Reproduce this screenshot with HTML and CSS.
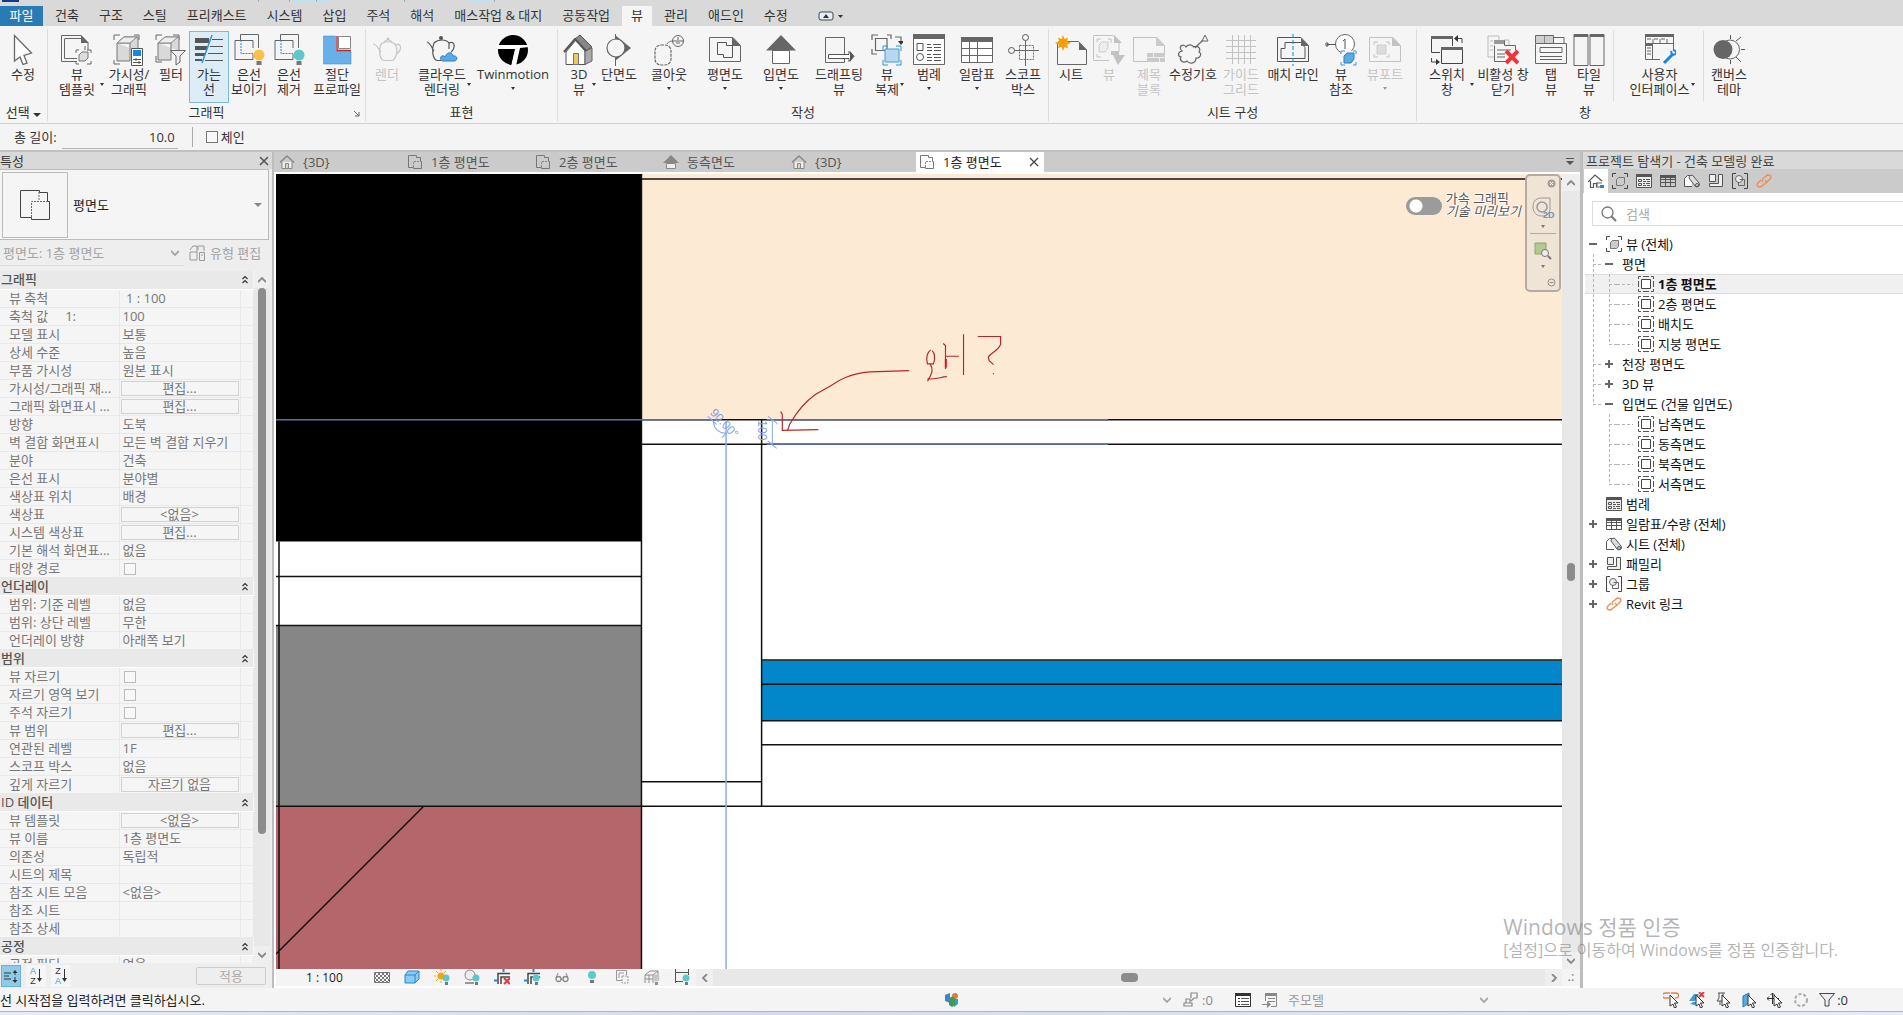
FILE: index.html
```html
<!DOCTYPE html>
<html lang="ko">
<head>
<meta charset="utf-8">
<title>건축 모델링 - 1층 평면도</title>
<link rel="stylesheet" href="styles.css">
</head>
<body>
<svg class="defs" aria-hidden="true">
<defs>
<pattern id="dots" width="4" height="4" patternUnits="userSpaceOnUse"><path d="M0 0h2v2H0zM2 2h2v2H2z" fill="#777"/></pattern>
<symbol id="cursor" viewBox="0 0 32 32"><path d="M7.500 1.500V27l5.500-4 3 7.500 4-1.500-3-7.500 7.500-2.500z" fill="#fff" stroke="#666" stroke-width="1.300"/></symbol>
<symbol id="cube" viewBox="0 0 16 16"><path d="M4.500 6.500l2-2h6v6l-2 2h-6z" fill="#ccc" stroke="#777"/><path d="M.5 4V.5H4M12 .5h3.500V4M15.500 12v3.500H12M4 15.500H.5V12" fill="none" stroke="#444"/></symbol>
<symbol id="viewtpl" viewBox="0 0 32 32"><path d="M.5 1.500H20l7 7.500v7M.5 1.500v26H16M4 4.500h16M3.500 4.500v20H16M24 12v4" fill="none" stroke="#666"/><path d="M20 1l8 8h-8z" fill="#666"/><path d="M18 21l3-3h6v6l-3 3h-6z" fill="#ddd" stroke="#777"/><path d="M15 19v-3h3M26 16h4v3M30 27v3h-4M18 30h-3v-3" fill="none" stroke="#666"/></symbol>
<symbol id="visgraph" viewBox="0 0 32 32"><path d="M1 6V1h6M21 1h5v5M1 26v4h6" fill="none" stroke="#666"/><path d="M4 9l7-6h14v14M4 9v18h13V9z" fill="#d9d9d9" stroke="#777"/><path d="M4 9h13l7-6H11z" fill="#eee" stroke="#888"/><path d="M18.500 14.500h11v17h-11z" fill="#fff" stroke="#555"/><path d="M20 16h8v6h-8z" fill="#1787e0"/><path d="M20 25.500h8M20 28.500h8M23 24v3M26 27v3" stroke="#555"/></symbol>
<symbol id="filter" viewBox="0 0 32 32"><path d="M1 6V1h6M18 1h6v5M1 22v6h6" fill="none" stroke="#666"/><path d="M3 9l7-6h14v14M3 9v17h13V9z" fill="#d9d9d9" stroke="#777"/><path d="M3 9h13l7-6H10z" fill="#eee" stroke="#888"/><path d="M15.500 16.500h15L25 22v6l-4 3v-9z" fill="#eee" stroke="#666"/></symbol>
<symbol id="thin" viewBox="0 0 32 32"><path d="M2 4h14v5H2zM2 12h12v4H2zM2 19h10v3H2zM2 25h7v2H2z" fill="#555"/><path d="M19 5.500h11M17 12.500h13M15 19.500h15M12 26.500h18" stroke="#555"/><path d="M19 1L9 29" stroke="#2e94e6" stroke-width="1.500"/></symbol>
<symbol id="hide" viewBox="0 0 32 32"><path d="M7.500 6V.5h18V14M7 6.500H2v19h18V20M2 6.500h18V14" fill="none" stroke="#666"/><path d="M8 6v13.500h12" fill="none" stroke="#1787e0" stroke-dasharray="2 1"/><circle cx="26" cy="21" r="5.500" fill="currentColor"/><path d="M23.500 27h5v4h-5z" fill="#777"/></symbol>
<symbol id="cut" viewBox="0 0 32 32"><path d="M2.500 2h12v15.500H30V30H2.500z" fill="#67b0e8" stroke="#4495d4" stroke-width=".6"/><path d="M17.500 2.500h12v12h-12z" fill="#fff" stroke="#888"/><path d="M16 2v14.500h14" fill="none" stroke="#c0282e" stroke-width="1.400"/></symbol>
<symbol id="teapot" viewBox="0 0 32 32"><path d="M10 10C7 17 9 26 13 26.500h8C25 25 28 17 24 10 20 7 14 7 10 10zM10 18C8 16 6 10 2 10M25 11c6-3 6 6 0 9M13 8c2-3 6-3 8 0" fill="none" stroke="currentColor" stroke-width="1.200"/><circle cx="17" cy="5" r="1.500" fill="currentColor"/></symbol>
<symbol id="cloudpot" viewBox="0 0 32 32"><path d="M8 9C5 16 7 25 11 26.500h6M8 9C12 5 20 5 23 9v6M8 17C6 15 5 9 1 8M23 9c7-3 6 6 2 9" fill="none" stroke="#555" stroke-width="1.200"/><circle cx="15" cy="4" r="2" fill="#555"/><path d="M16 27c-4-4 1-7 3-4 2-6 8-5 8-1 5-1 5 5 1 5z" fill="#5aa9e6" stroke="#377eba"/></symbol>
<symbol id="twin" viewBox="0 0 32 32"><circle cx="16" cy="16" r="15" fill="#000"/><path d="M0 11h32v2l-9 1-4 18h-5l4-17H0z" fill="#fff"/><path d="M16.500 17l-3 14" stroke="#000" stroke-width="1"/></symbol>
<symbol id="house" viewBox="0 0 32 32"><path d="M3 18v12.500h19V17L13 6z" fill="#fff" stroke="#555"/><path d="M22 17v13.500l7-3.500V14z" fill="#aaa" stroke="#666"/><path d="M12 5l5-4 12 12-6 4z" fill="#888" stroke="#555"/><path d="M1 18L12 5l11 12" fill="none" stroke="#555" stroke-width="2"/><path d="M10.500 19.500h5v11h-5z" fill="#f1c958" stroke="#777"/></symbol>
<symbol id="section" viewBox="0 0 32 32"><path d="M12 1l16 13-16 13z" fill="#666"/><path d="M12.500 0v32" stroke="#666"/><circle cx="13" cy="14" r="9" fill="#f5f5f5" stroke="#666" stroke-width="1.200"/></symbol>
<symbol id="callout" viewBox="0 0 32 32"><rect x="2" y="11" width="16" height="20" rx="6" fill="none" stroke="#666" stroke-width="1.200" stroke-dasharray="3 1"/><path d="M14 10c2-3 5-3 6-3h11" fill="none" stroke="#666"/><circle cx="25" cy="7" r="5.500" fill="none" stroke="#666"/><path d="M25 3v3M23 9h4" stroke="#666"/></symbol>
<symbol id="plan" viewBox="0 0 32 32"><path d="M.5 3.500H24l7.500 8v16H.5z" fill="none" stroke="#666"/><path d="M23 3l9 9h-9z" fill="#666"/><path d="M8.500 8.500h9v3h6v12h-9v-3h-6z" fill="none" stroke="#555"/></symbol>
<symbol id="elev" viewBox="0 0 32 32"><path d="M16 1l15 15.500H1z" fill="#666"/><path d="M7.500 16.500h17v13h-17z" fill="#fff" stroke="#666"/></symbol>
<symbol id="draft" viewBox="0 0 32 32"><path d="M2.500 3.500h19v25h-19z" fill="none" stroke="#666"/><path d="M5.500 20.500H26v-3l5 5-5 5v-3H5.500z" fill="#fff" stroke="#555"/><path d="M27 17l4 5-4 6z" fill="#555"/></symbol>
<symbol id="dup" viewBox="0 0 32 32"><path d="M1 6V1h6M16 1h4v4M1 15v5h5M4.500 4.500H16v12H4.500zM24 3h6v6" fill="none" stroke="#666" stroke-width="1.200"/><path d="M27 7h6l-3 4z" fill="#333"/><path d="M14 15h14v13H14z" fill="#b5d8f3" stroke="#4a9adb"/><path d="M12 17v-5h5M25 12h5v5M12 26v5h5M30 26v5h-5" fill="none" stroke="#2d93d6"/></symbol>
<symbol id="legend" viewBox="0 0 32 32"><path d="M.5.500h31v30H.5z" fill="#fff" stroke="#666"/><path d="M0 0h32v5H0z" fill="#666"/><path d="M4 9.500h6v7H4z" fill="none" stroke="#555"/><circle cx="7" cy="23" r="3.500" fill="none" stroke="#555"/><path d="M14 10.500h4M20 10.500h8M14 13.500h5M21 13.500h7M14 16.500h5M21 16.500h7M14 20.500h4M20 20.500h8M14 23.500h5M21 23.500h7M14 26.500h5M21 26.500h7" stroke="#555"/></symbol>
<symbol id="sched" viewBox="0 0 32 32"><path d="M.5 3.500h31v25H.5z" fill="#fff" stroke="#666"/><path d="M0 3h32v5H0z" fill="#666"/><path d="M.5 14.500h31M.5 21.500h31M8.500 8v20M16.500 8v20" stroke="#666"/></symbol>
<symbol id="scope" viewBox="0 0 32 32"><path d="M18.500 7v25M8 16.500h24" stroke="#666"/><circle cx="18.500" cy="3.500" r="3" fill="none" stroke="#555"/><circle cx="4.500" cy="16.500" r="3" fill="none" stroke="#555"/><path d="M12.500 11.500h14v14h-14z" fill="none" stroke="#1787e0" stroke-dasharray="2 1"/></symbol>
<symbol id="sheet" viewBox="0 0 32 32"><path d="M2.500 8v22.500h29V16l-8-8.500H12" fill="none" stroke="#666"/><path d="M24 8l8 8h-8z" fill="#666"/><path d="M8 1l1.500 4L13 3.500 12 7l4 2-4 1.500 1 4L9.500 13 8 17l-1.500-4L3 14l1-3.500L0 9l4-2-1-3.500L6.500 5z" fill="#f59f0a"/></symbol>
<symbol id="placeview" viewBox="0 0 32 32"><path d="M26 18v-9l-6-7.500H.5v25H16M4 8V5h4M15 5h3v4M4 20v3h4" fill="none" stroke="#c2c2c2"/><path d="M21 1l8 8h-8zM18 17h8v4h6l-7 10-5-10h-2z" fill="#c2c2c2"/><path d="M6 11l3-3h6v6l-3 4H6z" fill="#eee" stroke="#ccc"/></symbol>
<symbol id="title" viewBox="0 0 32 32"><path d="M.5 3.500H24l7.500 8v16H.5z" fill="none" stroke="#c2c2c2"/><path d="M23 3l9 9h-9zM14 19h18v9H14z" fill="#cacaca"/><path d="M14 23.500h18M20.500 19v4M26.500 24v4" stroke="#eee"/></symbol>
<symbol id="rev" viewBox="0 0 32 32"><path d="M5 17c-5-5 2-8 4-4 3-4 8-1 7 0 6-2 8 2 6 5 4 2 0 7-3 6 0 5-6 7-9 3-4 3-8-1-6-4-4-1-3-5 1-6zM18 14l8-8" fill="none" stroke="#666" stroke-width="1.200"/><path d="M25 7h6l-3-6z" fill="none" stroke="#666"/></symbol>
<symbol id="grid" viewBox="0 0 32 32"><path d="M7.500 1v29M13.500 1v29M19.500 1v29M25.500 1v29M1 6.500h30M1 12.500h30M1 18.500h30M1 24.500h30" stroke="#c2c2c2"/></symbol>
<symbol id="match" viewBox="0 0 32 32"><path d="M.5 3.500H24l7.500 8v16H.5zM9 8.500h-1v6H4v10h24v-11l-4-5H9" fill="none" stroke="#555"/><path d="M24 4l8 8h-8z" fill="#666"/><path d="M16 0v32" stroke="#1787e0" stroke-dasharray="4 2"/></symbol>
<symbol id="ref" viewBox="0 0 32 32"><circle cx="20" cy="10" r="9.500" fill="#fff" stroke="#666"/><path d="M2 10.500h9M1 9h2v3H1zM18 7l2-2v10" fill="none" stroke="#555"/><path d="M16 17h16v15H16z" fill="#f5f5f5"/><path d="M16 20v-3h4M28 17h3v3M31 28v3h-3M20 31h-4v-3" fill="none" stroke="#3a97da"/><path d="M19 22l3-3h7v6l-3 4h-7z" fill="#5aaae4" stroke="#2a7fc0"/></symbol>
<symbol id="vport" viewBox="0 0 32 32"><path d="M.5 3.500H24l7.500 8v16H.5zM5 11V8h4M17 8h3v3M5 20v3h4M17 23h3v-3" fill="none" stroke="#c2c2c2"/><path d="M23 3l9 9h-9z" fill="#c2c2c2"/><path d="M8 11h9v9H8z" fill="#ddd" stroke="#ccc"/></symbol>
<symbol id="switch" viewBox="0 0 32 32"><path d="M9 18.500H.5v-16h21V12M10.500 14.500h21v15h-21zM31 9V4.500h-5M.5 24v4H6" fill="none" stroke="#444"/><path d="M0 2h22v3H0zM10 13h22v3H10z" fill="#666"/><path d="M27 1v7l-4-3.500zM5 25v6l4-3z" fill="#333"/></symbol>
<symbol id="closewin" viewBox="0 0 32 32"><path d="M1 2h11v4M1 2v21h6M3 7h3M3 12h3M3 16h3M17 6h5v5" fill="none" stroke="#bbb"/><path d="M7.500 11.500v16H18M7.500 6.500h10v5h11v5M10 16h14M10 20h8M10 23h8" fill="none" stroke="#666"/><path d="M7 6h10v4H7z" fill="#999"/><path d="M19 17l12 12M31 17L19 29" stroke="#ee3439" stroke-width="4"/></symbol>
<symbol id="tabview" viewBox="0 0 32 32"><path d="M.5 9.500h31v20H.5zM.5 9V1.500h18V9M9.500 2v7M19 3.500h10V9M5 13.500h22v5H5zM5 22.500h22M5 25.500h22" fill="none" stroke="#666"/><path d="M1 2h17v7H1z" fill="#aaa" opacity=".5"/></symbol>
<symbol id="tile" viewBox="0 0 32 32"><path d="M1 .5h14v31H1zM17 .5h14v31H17z" fill="none" stroke="#666"/><path d="M1 0h14v3H1zM17 0h14v3H17z" fill="#666"/></symbol>
<symbol id="ui" viewBox="0 0 32 32"><path d="M16 25.500H1.500v-25h28V16M1.500 9.500h28M8.500 9v16M9 5v4M16 5v4M23 5v4M3 14h4M3 17h4M3 20h4M3 5h4M10 5h4M17 5h4" fill="none" stroke="#666"/><path d="M1 0h29v3H1zM1 10h7v2H1z" fill="#666"/><path d="M20 29l9-9" stroke="#1787e0" stroke-width="3"/><path d="M27 17l1 4 4-1v-3l-3-1" fill="none" stroke="#1787e0" stroke-width="2"/></symbol>
<symbol id="theme" viewBox="0 0 32 32"><circle cx="17" cy="15.500" r="9.500" fill="none" stroke="#666"/><circle cx="10" cy="15.500" r="9.500" fill="#666"/><path d="M17.500 1v4M17.500 26v4M23 7l5-4M23 23l5 5M28 15.500h5" stroke="#555"/></symbol>
<symbol id="planfile" viewBox="0 0 16 16"><path d="M1.500 1.500h8v2h4v4h1v7h-8v-1h-5z" fill="none" stroke="#777"/><path d="M6.500 13V7.500h7" fill="none" stroke="#888" stroke-dasharray="2 1"/></symbol>
<symbol id="home" viewBox="0 0 16 16"><path d="M3 8v6.500h10V8" fill="#eee" stroke="#888"/><path d="M1 8.500L8 2l7 6.500" fill="none" stroke="#888" stroke-width="1.500"/><path d="M6.500 9.500h3v5h-3z" fill="#dfd6ac" stroke="#888"/></symbol>
<symbol id="elevs" viewBox="0 0 16 16"><path d="M8 1l8 8H0z" fill="#888"/><path d="M3.500 9.500h9v5h-9z" fill="#eee" stroke="#888"/></symbol>
<symbol id="viewbox" viewBox="0 0 16 16"><path d="M3.500 3.500h9v9h-9z" fill="#fff" stroke="#444"/><path d="M.5 3V.5H3M5 .5h6M13 .5h2.500V3M15.500 5v6M15.500 13v2.500H13M11 15.500H5M3 15.500H.5V13M.5 11V5" fill="none" stroke="#555"/></symbol>
<symbol id="legs" viewBox="0 0 16 16"><path d="M.5 1.500h15v13H.5z" fill="#eee" stroke="#555"/><path d="M0 1h16v3H0z" fill="#555"/><path d="M2.500 6.500h3v2h-3zM2.500 10.500h3v2h-3zM7 6.500h2M10 6.500h4M7 8.500h3M11 8.500h3M7 10.500h2M10 10.500h4M7 12.500h3M11 12.500h3" fill="none" stroke="#555"/></symbol>
<symbol id="scheds" viewBox="0 0 16 16"><path d="M.5 2.500h15v11H.5zM0 6.500h16M0 9.500h16M5.500 3v11M10.500 3v11" fill="none" stroke="#555"/><path d="M0 2h16v3H0z" fill="#555"/></symbol>
<symbol id="sheets" viewBox="0 0 16 16"><path d="M8 13.500H.5v-8l3-3h5" fill="#fff" stroke="#555"/><path d="M5 5c0-3 4-4 5-1l5 6c2 3-2 5-4 3z" fill="#ddd" stroke="#555"/><circle cx="13" cy="12" r="1.500" fill="none" stroke="#555"/></symbol>
<symbol id="fam" viewBox="0 0 16 16"><path d="M1.500 1.500h6v7h-6zM10.500 1.500h4v12h-13v-3h9z" fill="#eee" stroke="#555"/></symbol>
<symbol id="group" viewBox="0 0 16 16"><path d="M4 .5H.5v15H4M12 .5h3.500v15H12" fill="none" stroke="#444"/><circle cx="7" cy="6" r="3.500" fill="#eee" stroke="#666"/><path d="M7.500 6.500h5v6h-6V9" fill="none" stroke="#666"/></symbol>
<symbol id="link" viewBox="0 0 16 16"><path d="M7 9C5 7 7 5 9 4c3-4 8-1 5 2l-4 4M9 7c3 2 0 4-2 5-3 4-8 1-5-2l3-3" fill="none" stroke="#ee8a55" stroke-width="1.300"/></symbol>
<symbol id="proj" viewBox="0 0 16 16"><path d="M0 9l7-7 7 6M2.500 8v6.500h3v-4h3v4" fill="none" stroke="#555" stroke-width="1.200"/><path d="M9 9v5h5M9 10h5" fill="none" stroke="#666"/><path d="M12 12h4v3h-4z" fill="#2e82c4"/></symbol>
<symbol id="mag" viewBox="0 0 16 16"><circle cx="6.500" cy="6.500" r="5.500" fill="none" stroke="#777" stroke-width="1.300"/><path d="M10.500 10.500L15 15" stroke="#777" stroke-width="2"/></symbol>
<symbol id="chev" viewBox="0 0 8 12"><path d="M1.500 5L4 2.500 6.500 5M1.500 9L4 6.500 6.500 9" fill="none" stroke="#333" stroke-width="1.200"/></symbol>
<symbol id="up" viewBox="0 0 8 8"><path d="M0 6l4-4 4 4" fill="none" stroke="#888" stroke-width="1.800"/></symbol>
<symbol id="bulb" viewBox="0 0 16 16"><circle cx="8" cy="6" r="4" fill="#5cc8cc"/><path d="M6 11h4v3H6z" fill="#777"/></symbol>
<symbol id="minibulb" viewBox="0 0 16 16"><circle cx="12" cy="9" r="3.500" fill="currentColor"/><path d="M11 13h3v3h-3z" fill="#777"/></symbol>
<symbol id="corner" viewBox="0 0 16 16"><path d="M4 15V4.500h12M7 15V8h9" fill="none" stroke="#444" stroke-width="1.500"/><path d="M0 11.500h3M9.500 0v3" stroke="#2686cc" stroke-width="2"/></symbol>
<symbol id="pick" viewBox="0 0 16 16"><path d="M7 3v11l3-2 1.500 4 2-1-2-4H15z" fill="#fff" stroke="#333"/></symbol>
</defs>
</svg>

<header class="ribbon">
<svg class="title-edge" aria-hidden="true"><path d="M2 0h17v2H2z" fill="#163a83"/><path d="M293 0h36v2h-36zM470 0h22v2h-22z" fill="#bfe3f2"/><path d="M258.500 0v2M289.500 0v2M316.500 0v2M404.500 0v2M494.500 0v2" stroke="#aaa"/></svg>
<nav class="tabs" aria-label="리본 탭">
<button class="tab file">파일</button><button class="tab">건축</button><button class="tab">구조</button><button class="tab">스틸</button><button class="tab">프리캐스트</button><button class="tab">시스템</button><button class="tab">삽입</button><button class="tab">주석</button><button class="tab">해석</button><button class="tab">매스작업 &amp; 대지</button><button class="tab">공동작업</button><button class="tab on">뷰</button><button class="tab">관리</button><button class="tab">애드인</button><button class="tab">수정</button>
<button class="mini" aria-label="리본 최소화"><svg width="26" height="10"><rect x="1" y="1" width="14" height="8" rx="2" fill="#e8eef6" stroke="#444"/><path d="M5 7l3-4 3 4zM20 4h5l-2.500 3z" fill="#333"/></svg></button>
</nav>
<div class="panels">
<section class="panel p-sel"><div class="tools">
<button class="tool w40"><svg><use href="#cursor"/></svg>수정</button>
</div><h2>선택 <i class="caret big"></i></h2></section>
<section class="panel p-gfx"><div class="tools">
<button class="tool w56"><svg><use href="#viewtpl"/></svg>뷰<br>템플릿<i class="caret side"></i></button>
<button class="tool w48"><svg><use href="#visgraph"/></svg>가시성/<br>그래픽</button>
<button class="tool w36"><svg><use href="#filter"/></svg>필터</button>
<button class="tool w40 active"><svg><use href="#thin"/></svg>가는<br>선</button>
<button class="tool w40"><svg class="amber"><use href="#hide"/></svg>은선<br>보이기</button>
<button class="tool w40"><svg class="teal"><use href="#hide"/></svg>은선<br>제거</button>
<button class="tool w56"><svg><use href="#cut"/></svg>절단<br>프로파일</button>
</div><h2>그래픽<svg class="launch" width="6" height="6"><path d="M0 0l5 5M5 1v4H1" fill="none" stroke="#666"/></svg></h2></section>
<section class="panel p-pres"><div class="tools">
<button class="tool w40" disabled><svg><use href="#teapot"/></svg>렌더</button>
<button class="tool w60"><svg><use href="#cloudpot"/></svg>클라우드<br>렌더링<i class="caret side"></i></button>
<button class="tool w72"><svg><use href="#twin"/></svg>Twinmotion<i class="caret"></i></button>
</div><h2>표현</h2></section>
<section class="panel p-make"><div class="tools">
<button class="tool w36"><svg><use href="#house"/></svg>3D<br>뷰<i class="caret side"></i></button>
<button class="tool w44"><svg><use href="#section"/></svg>단면도</button>
<button class="tool w56"><svg><use href="#callout"/></svg>콜아웃<i class="caret"></i></button>
<button class="tool w56"><svg><use href="#plan"/></svg>평면도<i class="caret"></i></button>
<button class="tool w56"><svg><use href="#elev"/></svg>입면도<i class="caret"></i></button>
<button class="tool w60"><svg><use href="#draft"/></svg>드래프팅<br>뷰</button>
<button class="tool w36"><svg><use href="#dup"/></svg>뷰<br>복제<i class="caret side"></i></button>
<button class="tool w48"><svg><use href="#legend"/></svg>범례<i class="caret"></i></button>
<button class="tool w48"><svg><use href="#sched"/></svg>일람표<i class="caret"></i></button>
<button class="tool w44"><svg><use href="#scope"/></svg>스코프<br>박스</button>
</div><h2>작성</h2></section>
<section class="panel p-sheet"><div class="tools">
<button class="tool w36"><svg><use href="#sheet"/></svg>시트</button>
<button class="tool w40" disabled><svg><use href="#placeview"/></svg>뷰</button>
<button class="tool w40" disabled><svg><use href="#title"/></svg>제목<br>블록</button>
<button class="tool w48"><svg><use href="#rev"/></svg>수정기호</button>
<button class="tool w48" disabled><svg><use href="#grid"/></svg>가이드<br>그리드</button>
<button class="tool w56"><svg><use href="#match"/></svg>매치 라인</button>
<button class="tool w40"><svg><use href="#ref"/></svg>뷰<br>참조</button>
<button class="tool w48" disabled><svg><use href="#vport"/></svg>뷰포트<i class="caret"></i></button>
</div><h2>시트 구성</h2></section>
<section class="panel p-win"><div class="tools">
<button class="tool w56"><svg><use href="#switch"/></svg>스위치<br>창<i class="caret side"></i></button>
<button class="tool w56"><svg><use href="#closewin"/></svg>비활성 창<br>닫기</button>
<button class="tool w40"><svg><use href="#tabview"/></svg>탭<br>뷰</button>
<button class="tool w36"><svg><use href="#tile"/></svg>타일<br>뷰</button>
<span class="sep"></span>
<button class="tool w72"><svg><use href="#ui"/></svg>사용자<br>인터페이스<i class="caret side"></i></button>
<span class="sep tight"></span>
<button class="tool w48"><svg><use href="#theme"/></svg>캔버스<br>테마</button>
</div><h2>창</h2></section>
</div>
</header>

<form class="options">
<label for="len">총 길이:</label><input id="len" type="text" value="10.0">
<label class="chain"><input type="checkbox" class="check">체인</label>
</form>

<main class="work">
<aside class="props">
<h2 class="bar">특성<button class="x" aria-label="닫기"><svg width="10" height="10"><path d="M1 1l8 8M9 1L1 9" stroke="#555" stroke-width="1.600"/></svg></button></h2>
<button class="type"><span class="thumb"><svg width="32" height="32" viewBox="0 0 32 32"><path d="M1.500 1.500h19v2h8v9h2v18h-18v-2h-11z" fill="none" stroke="#444"/><path d="M12.500 28V12.500h16M20 3v9" fill="none" stroke="#666" stroke-dasharray="2 1"/></svg></span><span>평면도</span><i class="caret big"></i></button>
<div class="inst"><span class="drop"><select aria-label="인스턴스" disabled><option>평면도: 1층 평면도</option></select><svg width="8" height="8"><use href="#up"/></svg></span><button disabled><svg width="16" height="16"><path d="M1 5l3-4h4v6H1v8h7V7M9 5V1h6v5M10.500 7.500h5v8h-5zM12 10h2" fill="none" stroke="#999"/></svg>유형 편집</button></div>
<div class="plist">
<table>
<colgroup><col class="c1"><col class="c2"><col class="c3"></colgroup>
<tbody>
<tr class="grp"><th colspan="2">그래픽</th><td><svg><use href="#chev"/></svg></td></tr>
<tr><th>뷰 축척</th><td>&nbsp;1 : 100</td><td></td></tr>
<tr><th>축척 값 &nbsp; &nbsp; 1:</th><td>100</td><td></td></tr>
<tr><th>모델 표시</th><td>보통</td><td></td></tr>
<tr><th>상세 수준</th><td>높음</td><td></td></tr>
<tr><th>부품 가시성</th><td>원본 표시</td><td></td></tr>
<tr><th>가시성/그래픽 재...</th><td><button>편집...</button></td><td></td></tr>
<tr><th>그래픽 화면표시 ...</th><td><button>편집...</button></td><td></td></tr>
<tr><th>방향</th><td>도북</td><td></td></tr>
<tr><th>벽 결합 화면표시</th><td>모든 벽 결합 지우기</td><td></td></tr>
<tr><th>분야</th><td>건축</td><td></td></tr>
<tr><th>은선 표시</th><td>분야별</td><td></td></tr>
<tr><th>색상표 위치</th><td>배경</td><td></td></tr>
<tr><th>색상표</th><td><button>&lt;없음&gt;</button></td><td></td></tr>
<tr><th>시스템 색상표</th><td><button>편집...</button></td><td></td></tr>
<tr><th>기본 해석 화면표...</th><td>없음</td><td></td></tr>
<tr><th><label for="sun">태양 경로</label></th><td><input id="sun" type="checkbox" class="check"></td><td></td></tr>
</tbody>
<tbody>
<tr class="grp"><th colspan="2">언더레이</th><td><svg><use href="#chev"/></svg></td></tr>
<tr><th>범위: 기준 레벨</th><td>없음</td><td></td></tr>
<tr><th>범위: 상단 레벨</th><td>무한</td><td></td></tr>
<tr><th>언더레이 방향</th><td>아래쪽 보기</td><td></td></tr>
</tbody>
<tbody>
<tr class="grp"><th colspan="2">범위</th><td><svg><use href="#chev"/></svg></td></tr>
<tr><th><label for="crop">뷰 자르기</label></th><td><input id="crop" type="checkbox" class="check"></td><td></td></tr>
<tr><th><label for="cropv">자르기 영역 보기</label></th><td><input id="cropv" type="checkbox" class="check"></td><td></td></tr>
<tr><th><label for="cropa">주석 자르기</label></th><td><input id="cropa" type="checkbox" class="check"></td><td></td></tr>
<tr><th>뷰 범위</th><td><button>편집...</button></td><td></td></tr>
<tr><th>연관된 레벨</th><td>1F</td><td></td></tr>
<tr><th>스코프 박스</th><td>없음</td><td></td></tr>
<tr><th>깊게 자르기</th><td><button>자르기 없음</button></td><td></td></tr>
</tbody>
<tbody>
<tr class="grp"><th colspan="2">ID 데이터</th><td><svg><use href="#chev"/></svg></td></tr>
<tr><th>뷰 템플릿</th><td><button>&lt;없음&gt;</button></td><td></td></tr>
<tr><th>뷰 이름</th><td>1층 평면도</td><td></td></tr>
<tr><th>의존성</th><td>독립적</td><td></td></tr>
<tr><th>시트의 제목</th><td></td><td></td></tr>
<tr><th>참조 시트 모음</th><td>&lt;없음&gt;</td><td></td></tr>
<tr><th>참조 시트</th><td></td><td></td></tr>
<tr><th>참조 상세</th><td></td><td></td></tr>
</tbody>
<tbody>
<tr class="grp"><th colspan="2">공정</th><td><svg><use href="#chev"/></svg></td></tr>
<tr><th>공정 필터</th><td>없음</td><td></td></tr>
</tbody>
</table>
<div class="vscroll"><button aria-label="위로"><svg width="8" height="8"><use href="#up"/></svg></button><div class="track"><div class="knob"></div></div><button class="down" aria-label="아래로"><svg width="8" height="8"><use href="#up"/></svg></button></div>
</div>
<div class="pfoot">
<button class="sort on" aria-label="그룹 정렬"><svg width="14" height="14"><path d="M0 4h7M0 7h5M0 10h7M11 2v4M11 8v5" stroke="#333"/><path d="M8.500 4L11 1l2.500 3M8.500 11l2.500 3 2.500-3" fill="#333"/></svg></button>
<button class="sort" aria-label="오름차순"><b class="bl">A</b><b>Z</b><svg width="5" height="14"><path d="M2.500 0v10" stroke="#333"/><path d="M0 9h5l-2.500 4z" fill="#333"/></svg></button>
<button class="sort" aria-label="내림차순"><b>Z</b><b class="bl">A</b><svg width="5" height="14"><path d="M2.500 0v10" stroke="#333"/><path d="M0 9h5l-2.500 4z" fill="#333"/></svg></button>
<button class="apply" disabled>적용</button>
</div>
</aside>

<section class="doc">
<nav class="dtabs" aria-label="열린 뷰">
<button><svg><use href="#home"/></svg>{3D}</button><button><svg><use href="#planfile"/></svg>1층 평면도</button><button><svg><use href="#planfile"/></svg>2층 평면도</button><button><svg><use href="#elevs"/></svg>동측면도</button><button><svg><use href="#home"/></svg>{3D}</button><button class="on"><svg><use href="#planfile"/></svg>1층 평면도<svg class="cl" viewBox="0 0 10 10"><path d="M1 1l8 8M9 1L1 9" stroke="#444" stroke-width="1.300"/></svg></button>
<button class="more" aria-label="뷰 목록"><svg width="8" height="8"><path d="M0 .5h8" stroke="#555"/><path d="M0 3h8L4 7z" fill="#555"/></svg></button>
</nav>
<div class="view">
<div class="canvas">
<svg class="drawing" viewBox="0 0 1286 794" preserveAspectRatio="xMinYMin slice">
<path d="M0 0h1286v794H0z" fill="#fff"/>
<path d="M365 0h921v245H365z" fill="#fdead4"/>
<path d="M0 0h365v367H0z"/>
<path d="M0 451h365v181H0z" fill="#868686"/>
<path d="M0 632h365v162H0z" fill="#b4666b"/>
<path d="M485 486h801v60H485z" fill="#0287cb"/>
<g stroke="#111" stroke-width="1.500" fill="none">
<path d="M365 5h921M365 245.500h921M365 270h921M0 402h365M0 451h365M0 631.500h1286M365 607h120M485 485.500h801M485 509.500h801M485 546h801M485 570h801M365 0v794M3 367v427M485 245v386M0 779l147-147"/>
</g>
<path d="M0 245.500h444M490 245.500h341M490 270h341" stroke="#5b6f9f" stroke-width="1.500"/>
<path d="M449.500 246v548" stroke="#8fabeb" stroke-width="1.500"/>
<g transform="translate(404 136) scale(.33333)" fill="none" stroke-width="3" stroke="#86a5ea">
<path d="M82 318l26 24M98 335c4 22 18 34 40 34M124 382l16-16M275 330v70M262 318l28 22M262 392l26 22"/>
<g stroke="#b5262b" stroke-width="3.500">
<path d="M685 181l-118 4c-60 6-90 22-118 42l-44 25c-40 28-62 62-78 90l-6 18M300 304l5 8v48l108-2"/>
<path d="M750 119c-18 12-12 32-10 42h18c6-20 4-32-4-40M748 161c8 14 10 22-8 52M740 206c24 2 40-6 58-7M787 100l7 6v70M796 138h38M848 72v122M891 79h68v24c-8 20-30 24-37 38l3 10 13 12M936 190h3"/>
<path d="M795 146v26" stroke="#e0141c" stroke-width="6"/>
</g>
</g>
<g fill="#7f9fe8" class="dim"><text transform="translate(433 239) rotate(47)">90.00°</text><text transform="translate(481 246) rotate(90)">100</text></g>
</svg>
<label class="accel"><input type="checkbox"><span>가속 그래픽<br><em>기술 미리보기</em></span></label>
<div class="navbar">
<button aria-label="닫기"><svg width="9" height="9"><circle cx="4.500" cy="4.500" r="4" fill="#aaa095"/><path d="M3 3l3 3M6 3L3 6" stroke="#fff"/></svg></button>
<svg width="24" height="24"><path d="M2 11C2 4 6 2 11 2h8v10c0 6-3 8-8 8s-9-3-9-9z" fill="none" stroke="#999"/><circle cx="11" cy="11" r="5" fill="none" stroke="#999" stroke-width="1.500"/><text x="12" y="22">2D</text></svg>
<i class="caret"></i><hr>
<svg width="18" height="18"><path d="M1 1h11v11H1z" fill="#b1ca8e" stroke="#8aa376"/><circle cx="11" cy="11" r="3.500" fill="#eee" stroke="#777"/><path d="M14 14l3 3" stroke="#777" stroke-width="2"/></svg>
<i class="caret"></i>
<button class="min" aria-label="최소화"><svg width="9" height="9"><circle cx="4.500" cy="4.500" r="3.500" fill="none" stroke="#998f84"/><path d="M2.500 4.500h4" stroke="#998f84"/></svg></button>
</div>
</div>
<div class="vscroll wide"><button aria-label="위로"><svg width="8" height="8"><use href="#up"/></svg></button><div class="track"><div class="knob"></div></div><button class="down" aria-label="아래로"><svg width="8" height="8"><use href="#up"/></svg></button></div>
</div>
<div class="vbar">
<button class="scale">1 : 100</button>
<div class="vtools">
<svg viewBox="0 0 16 16"><path d="M.5 3.500h15v10H.5z" fill="url(#dots)" stroke="#777"/></svg>
<svg viewBox="0 0 16 16"><path d="M1 6l3-4h11v8l-4 4H1z" fill="#8ecbf4" stroke="#2686cc"/><path d="M1 6h10v8M11 6l4-4" fill="none" stroke="#2686cc"/></svg>
<svg viewBox="0 0 16 16" class="teal"><circle cx="7" cy="7" r="3.500" fill="#f5a30e"/><path d="M7 0v2M0 7h2M2 2l2 2M12 2l-2 2M2 12l2-2M7 12v2" stroke="#f5a30e"/><use href="#minibulb"/></svg>
<svg viewBox="0 0 16 16" class="teal"><circle cx="6" cy="6" r="5" fill="#eee" stroke="#888"/><path d="M1 14h9" stroke="#999" stroke-width="2"/><use href="#minibulb"/></svg>
<svg viewBox="0 0 16 16"><use href="#corner"/><path d="M10 9l6 6M16 9l-6 6" stroke="#e2373b" stroke-width="2"/></svg>
<svg viewBox="0 0 16 16" class="teal"><use href="#corner"/><use href="#minibulb"/></svg>
<svg viewBox="0 0 16 16"><circle cx="4.500" cy="10" r="2.500" fill="none" stroke="#888" stroke-width="1.300"/><circle cx="11.500" cy="10" r="2.500" fill="none" stroke="#888" stroke-width="1.300"/><path d="M2 9l2-5M14 9l-2-5M7 10h2" stroke="#888"/></svg>
<svg viewBox="0 0 16 16"><use href="#bulb"/></svg>
<svg viewBox="0 0 16 16"><path d="M8 11.500H2.500v-10h10V6M5 9V4h5" fill="none" stroke="#999"/><path d="M8 7h6v7H8z" fill="none" stroke="#999" stroke-dasharray="2 1"/></svg>
<svg viewBox="0 0 16 16" class="dimmed"><path d="M1 14V6l5-4h8v6M1 6h8v8M5 6v8M1 10h9M9 6l5-4" fill="none" stroke="#777"/><use href="#minibulb"/></svg>
<svg viewBox="0 0 16 16" class="teal"><path d="M1.500 0v14M14.500 0v6M1 3.500h13M2 12.500h7" fill="none" stroke="#555"/><use href="#minibulb"/></svg>
</div>
<div class="hscroll"><button class="left" aria-label="왼쪽"><svg width="8" height="8"><use href="#up"/></svg></button><div class="track"><div class="knob"></div></div><button class="right" aria-label="오른쪽"><svg width="8" height="8"><use href="#up"/></svg></button></div>
<span class="grip">.:</span>
</div>
</section>

<aside class="browser">
<h2 class="bar">프로젝트 탐색기 - 건축 모델링 완료</h2>
<nav class="btabs" aria-label="탐색기 필터"><button class="on" aria-label="프로젝트"><svg><use href="#proj"/></svg></button><button aria-label="뷰"><svg><use href="#cube"/></svg></button><button aria-label="범례"><svg><use href="#legs"/></svg></button><button aria-label="일람표"><svg><use href="#scheds"/></svg></button><button aria-label="시트"><svg><use href="#sheets"/></svg></button><button aria-label="패밀리"><svg><use href="#fam"/></svg></button><button aria-label="그룹"><svg><use href="#group"/></svg></button><button aria-label="링크"><svg><use href="#link"/></svg></button></nav>
<div class="search"><svg width="16" height="16"><use href="#mag"/></svg><input type="search" placeholder="검색" aria-label="검색"></div>
<ul class="tree">
<li><i class="m"></i><svg><use href="#cube"/></svg>뷰 (전체)</li>
<li><i class="v h"></i><i class="m"></i><span>평면</span></li>
<li class="sel"><i class="v"></i><i class="v h"></i><i class="f"></i><svg><use href="#viewbox"/></svg><b>1층 평면도</b></li>
<li><i class="v"></i><i class="v h"></i><i class="f"></i><svg><use href="#viewbox"/></svg>2층 평면도</li>
<li><i class="v"></i><i class="v h"></i><i class="f"></i><svg><use href="#viewbox"/></svg>배치도</li>
<li><i class="v"></i><i class="e h"></i><i class="f"></i><svg><use href="#viewbox"/></svg>지붕 평면도</li>
<li><i class="v h"></i><i class="m p"></i><span>천장 평면도</span></li>
<li><i class="v h"></i><i class="m p"></i><span>3D 뷰</span></li>
<li><i class="e h"></i><i class="m"></i><span>입면도 (건물 입면도)</span></li>
<li><i></i><i class="v h"></i><i class="f"></i><svg><use href="#viewbox"/></svg>남측면도</li>
<li><i></i><i class="v h"></i><i class="f"></i><svg><use href="#viewbox"/></svg>동측면도</li>
<li><i></i><i class="v h"></i><i class="f"></i><svg><use href="#viewbox"/></svg>북측면도</li>
<li><i></i><i class="e h"></i><i class="f"></i><svg><use href="#viewbox"/></svg>서측면도</li>
<li><i></i><svg><use href="#legs"/></svg>범례</li>
<li><i class="m p"></i><svg><use href="#scheds"/></svg>일람표/수량 (전체)</li>
<li><i></i><svg><use href="#sheets"/></svg>시트 (전체)</li>
<li><i class="m p"></i><svg><use href="#fam"/></svg>패밀리</li>
<li><i class="m p"></i><svg><use href="#group"/></svg>그룹</li>
<li><i class="m p"></i><svg><use href="#link"/></svg>Revit 링크</li>
</ul>
</aside>
</main>

<footer class="status">
<span class="msg">선 시작점을 입력하려면 클릭하십시오.</span>
<svg width="16" height="16"><path d="M1 3l5-2v10l-5-2z" fill="#3a86c8"/><circle cx="11" cy="4" r="3" fill="#e17a3c"/><path d="M10 7h4v5l-4 3z" fill="#3e9ac0"/><path d="M5 6l3-1.500L11 6v7l-3 2-3-2z" fill="#3f9a56"/></svg>
<svg class="dd" width="8" height="8"><use href="#up"/></svg>
<span class="num"><svg width="16" height="16"><path d="M1 14h8v-3H1zM3 11V7h4v4M8 6V1h6v5h-3l-3 3" fill="none" stroke="#888" stroke-width="1.200"/></svg>:0</span>
<svg class="ls" width="16" height="16"><path d="M.5 1.500h15v13H.5z" fill="#fff" stroke="#333"/><path d="M0 1h16v3H0zM3 6h2v1H3zM3 9h2v1H3zM3 12h2v1H3z" fill="#333"/><path d="M6 6.500h8M6 9.500h8M6 12.500h8" stroke="#555"/></svg>
<svg class="ls2" width="16" height="16"><path d="M3.500 9V1.500h11v13H9M6 6.500h7M6 9.500h7M0 12.500h8" fill="none" stroke="#888"/><path d="M3 1h12v3H3zM5 9l4 3.500L5 16z" fill="#888"/></svg>
<span class="drop model"><select aria-label="디자인 옵션" disabled><option>주모델</option></select><svg width="8" height="8"><use href="#up"/></svg></span>
<div class="sel-tools">
<svg viewBox="0 0 16 16"><path d="M7 1H3a3 2 0 000 5h3M8 1h4a3 2 0 010 5" fill="none" stroke="#e4824e" stroke-width="1.500"/><use href="#pick"/></svg>
<svg viewBox="0 0 16 16"><path d="M0 9l5-7h5l-4 7zM1 12l3-2h4l-2 3z" fill="#4a97cf"/><path d="M10 0l5 5M15 0l-5 5" stroke="#e2373b" stroke-width="1.800"/><use href="#pick"/></svg>
<svg viewBox="0 0 16 16"><path d="M3 1h7M4 1v5L2 9h8L8 6V1M5 9v4" fill="none" stroke="#555"/><use href="#pick"/></svg>
<svg viewBox="0 0 16 16"><path d="M2 4l6-3v10l-6 4z" fill="#5aa9e0" stroke="#2a78b4"/><use href="#pick"/></svg>
<svg viewBox="0 0 16 16"><path d="M0 6.500h12M5.500 1v11M3.500 3l2-2 2 2M2 4.500l-2 2 2 2" fill="none" stroke="#333"/><use href="#pick"/></svg>
<svg viewBox="0 0 16 16"><circle cx="8" cy="8" r="6" fill="none" stroke="#aaa" stroke-width="2" stroke-dasharray="3 2"/></svg>
<svg viewBox="0 0 16 16"><path d="M.5 1.500h15L10 8v6H6V8z" fill="#eee" stroke="#444"/></svg>
</div>
<span class="cnt">:0</span>
</footer>
<div class="edge"></div>
<div class="watermark"><p class="wt">Windows 정품 인증</p><p>[설정]으로 이동하여 Windows를 정품 인증합니다.</p></div>
</body>
</html>
```
FILE: styles.css
```css
* { box-sizing: border-box; }
body {
  margin: 0;
  height: 100vh;
  display: flex;
  flex-direction: column;
  overflow: hidden;
  position: relative;
  font: 13px/16px "Open Sans", "Noto Sans CJK KR", sans-serif;
  color: #333;
  background: #f4f4f4;
}
button, input, select { font: inherit; color: inherit; margin: 0; padding: 0; border: 0; background: none; }
h2, p, ul { margin: 0; padding: 0; font-size: inherit; font-weight: 400; list-style: none; }
.defs { position: absolute; width: 0; height: 0; }

.caret { display: inline-block; width: 0; height: 0; border: 2px solid transparent; border-top: 3px solid #333; border-bottom: 0; }
.caret.big { border-width: 4px; border-bottom: 0; }
.check { appearance: none; width: 12px; height: 12px; border: 1px solid #777; background: #f8f8f8; }
.drop { display: flex; align-items: center; }
.drop select { appearance: none; flex: 1; opacity: 1; }
.drop svg { transform: rotate(180deg); opacity: .7; }

/* ribbon */
.ribbon { flex: none; background: #d9d9d9; }
.title-edge { display: block; width: 100%; height: 6px; }
.tabs { display: flex; height: 20px; }
.tab { padding: 0 10px 3px; white-space: nowrap; }
.tab.file { width: 43px; background: #2a7ab5; color: #fff; margin-right: 2px; padding: 0 0 3px; }
.tab.on { background: #f5f5f5; margin: 0 2px; padding: 0 9px 3px; }
.mini { margin-left: 20px; display: flex; align-items: center; }
.panels { display: flex; height: 98px; padding-top: 3px; background: #f5f5f5; border-bottom: 1px solid #d2d2d2; }
.panel { display: flex; flex-direction: column; border-right: 1px solid #dcdcdc; margin-bottom: 2px; flex: none; }
.panel h2 { text-align: center; padding-top: 2px; position: relative; white-space: nowrap; }
.launch { position: absolute; right: 5px; top: 9px; }
.tools { display: flex; height: 72px; padding-top: 2px; margin-bottom: 1px; }
.p-sel { width: 48px; }
.p-sel .tools { padding-left: 3px; }
.p-gfx { width: 318px; }
.p-gfx .tools { padding-left: 1px; }
.p-pres { width: 192px; }
.p-pres .tools { padding-left: 1px; gap: 5px; }
.p-make { width: 491px; }
.p-make .tools { padding-left: 3px; }
.p-sheet { width: 368px; }
.p-sheet .tools { padding-left: 4px; }
.p-win { width: 336px; border: 0; }
.p-win .tools { padding-left: 2px; }
.tool { position: relative; display: flow-root; height: 72px; flex: none; line-height: 15px; padding: 3px 0 0; white-space: nowrap; text-align: center; }
.tool > svg { display: block; width: 32px; height: 32px; margin: 0 auto 1px; overflow: visible; }
.tool::after { content: ""; display: block; height: 40px; }
.tool .caret { position: absolute; left: 50%; top: 56px; margin-left: -2px; }
.tool .caret.side { left: auto; right: 1px; top: 52px; }
.tool.active { background: #dcedf7; border: 1px solid #7fb9d8; padding-top: 2px; }
.tool:disabled { color: #c4c4c4; }
.tool:disabled .caret { border-top-color: #999; }
.amber { color: #fbc04a; }
.teal { color: #5cc8cc; }
.dimmed { color: #bbb; opacity: .8; }
.w36 { width: 36px; }
.w40 { width: 40px; }
.w44 { width: 44px; }
.w48 { width: 48px; }
.w56 { width: 56px; }
.w60 { width: 60px; }
.w72 { width: 72px; }
.sep { width: 1px; background: #dcdcdc; margin: 0 10px 0 6px; }
.sep.tight { margin: 0 2px 0 7px; }

.options { flex: none; height: 26px; display: flex; align-items: center; padding-left: 14px; }
.options > input { width: 116px; height: 23px; margin-left: 5px; text-align: right; padding: 0 3px; border-bottom: 1px solid #b5b5b5; }
.chain { display: flex; align-items: center; gap: 3px; height: 20px; margin-left: 14px; padding-left: 13px; border-left: 1px solid #aaa; }

/* work area */
.work { flex: 1; min-height: 0; display: flex; border-top: 2px solid #c1c1c1; background: #fff; }
.bar { flex: none; height: 17px; line-height: 16px; background: #d9d9d9; display: flex; align-items: center; justify-content: space-between; }
.props { width: 274px; flex: none; display: flex; flex-direction: column; background: #eee; border-right: 2px solid #bdbdbd; }
.x { display: flex; padding-right: 3px; }
.type { flex: none; display: flex; align-items: center; height: 71px; margin-right: 3px; padding: 0 6px 0 2px; border: 1px solid #bbb; border-left: 0; background: #f5f5f5; text-align: left; color: #222; }
.thumb { width: 66px; height: 66px; border: 1px solid #bbb; display: flex; align-items: center; justify-content: center; margin-right: 5px; }
.type .caret { margin-left: auto; border-top-color: #888; }
.inst { flex: none; height: 31px; display: flex; color: #a3a3a3; }
.inst .drop { width: 184px; height: 26px; padding: 0 5px 0 3px; border-bottom: 1px solid #ddd; }
.inst button { display: flex; align-items: center; gap: 5px; height: 26px; padding-left: 5px; color: #a3a3a3; }
.plist { flex: 1; min-height: 0; overflow: hidden; display: flex; margin-right: 2px; background: #f5f5f5; }
.plist table { width: 253px; flex: none; align-self: flex-start; border-collapse: collapse; table-layout: fixed; color: #777; }
.c1 { width: 119px; }
.c2 { width: 121px; }
.c3 { width: 13px; }
.plist tr { height: 18px; }
.plist th, .plist td { padding: 0 0 0 3px; height: 18px; line-height: 16px; border: 1px solid #e9e9e9; border-top: 0; border-left: 0; text-align: left; font-weight: 400; white-space: nowrap; overflow: hidden; vertical-align: top; }
.plist th { padding-left: 9px; }
.plist .grp th, .plist .grp td { background: #e9e9e9; border-right: 0; color: #555; font-weight: 500; padding: 0 0 0 1px; border-bottom-color: #fff; }
.grp svg { width: 8px; height: 12px; display: block; margin: 3px 0 0; }
.plist td button { display: block; width: 118px; height: 15px; line-height: 12px; margin: 1px 0 0 -2px; border: 1px solid #d2d2d2; text-align: center; }
.plist td .check { display: block; margin: 3px 0 0 1px; border-color: #bbb; }
.vscroll { width: 17px; flex: none; display: flex; flex-direction: column; background: #e8e8e8; }
.vscroll button { height: 17px; flex: none; display: flex; align-items: center; justify-content: center; background: #efefef; }
.vscroll .track { flex: 1; display: flex; flex-direction: column; align-items: center; }
.vscroll .knob { width: 8px; flex: none; border-radius: 4px; background: #8c8c8c; }
.props .knob { height: 83%; }
.down svg { transform: rotate(180deg); }
.pfoot { flex: none; height: 25px; display: flex; align-items: center; gap: 5px; padding: 0 6px 0 1px; }
.sort { width: 20px; height: 22px; background: #f5f5f5; display: grid; grid-template: 10px 10px / 8px 6px; justify-content: center; align-content: center; align-items: center; }
.sort b { font: 9px/10px "Liberation Sans", sans-serif; grid-column: 1; }
.sort svg { grid-column: 2; grid-row: 1 / 3; }
.sort .bl { color: #3a97da; }
.sort.on { background: #8fcbe8; border: 1px solid #6db2d6; display: flex; }
.apply { margin-left: auto; width: 70px; height: 18px; line-height: 14px; border: 1px solid #ccc; border-radius: 2px; color: #aaa; }

/* document area */
.doc { flex: 1; min-width: 0; display: flex; flex-direction: column; padding-left: 2px; border-bottom: 2px solid #fff; background: #fff; }
.dtabs { flex: none; display: flex; height: 20px; margin: 0 0 2px -2px; padding-left: 2px; background: #cbcbcb; }
.dtabs button { width: 128px; display: flex; align-items: center; gap: 8px; padding-left: 3px; color: #555; }
.dtabs svg { width: 16px; height: 16px; }
.dtabs .on { background: #fff; color: #222; }
.dtabs .cl { width: 10px; height: 10px; margin: 0 5px 0 auto; }
.dtabs .more { width: 14px; margin-left: auto; padding: 0; }
.dtabs .more svg { width: 8px; height: 8px; }
.view { flex: 1; min-height: 0; display: flex; }
.canvas { flex: 1; min-width: 0; position: relative; overflow: hidden; }
.drawing { display: block; width: 100%; height: 100%; }
.dim { font: 12px "Liberation Sans", sans-serif; }
.wide { width: 18px; }
.wide .track { justify-content: center; }
.wide .knob { height: 18px; }
.accel { position: absolute; right: 41px; top: 18px; display: flex; gap: 4px; line-height: 13px; color: #555; text-shadow: 1px 0 1px #fff, -1px 0 1px #fff, 0 1px 1px #fff, 0 -1px 1px #fff; }
.accel input { appearance: none; width: 36px; height: 18px; margin-top: 5px; border-radius: 9px; background: radial-gradient(circle at 10px 9px, #fff 6px, transparent 7px) #9b9b9b; }
.navbar { position: absolute; right: 1px; top: 0; width: 36px; height: 118px; padding: 3px; border: 2px solid #b5aa9e; border-radius: 5px; background: #f0e4d6; display: flex; flex-direction: column; align-items: center; gap: 5px; }
.navbar button { align-self: flex-end; display: flex; }
.navbar text { font: bold 9px "Liberation Sans", sans-serif; fill: #6f93b5; }
.navbar > svg { flex: none; margin-top: 3px; overflow: visible; }
.navbar hr { width: 26px; margin: 0; border: 0; border-top: 1px solid #b5aa9e; }
.navbar .min { margin-top: auto; }
.navbar .caret { flex: none; border-top-color: #777; }
.vbar { flex: none; height: 17px; display: flex; background: #f4f4f4; line-height: 15px; }
.scale { padding-left: 30px; width: 98px; text-align: left; flex: none; font-size: 12px; color: #222; }
.vtools { display: flex; gap: 14px; flex: none; width: 322px; }
.vtools svg { width: 16px; height: 16px; flex: none; }
.hscroll { flex: 1; display: flex; background: #e8e8e8; }
.hscroll button { width: 17px; display: flex; align-items: center; justify-content: center; background: #efefef; }
.left svg { transform: rotate(-90deg); }
.right svg { transform: rotate(90deg); }
.hscroll .track { flex: 1; display: flex; justify-content: center; align-items: center; }
.hscroll .knob { width: 17px; height: 9px; border-radius: 4px; background: #8c8c8c; }
.grip { width: 18px; text-align: center; color: #777; }

/* project browser */
.browser { width: 323px; flex: none; display: flex; flex-direction: column; background: #fff; border-left: 3px solid #bdbdbd; color: #111; }
.browser .bar { padding-left: 3px; color: #444; }
.btabs { display: flex; height: 24px; background: #cbcbcb; padding-left: 1px; flex: none; }
.btabs button { width: 24px; display: flex; align-items: center; justify-content: center; }
.btabs .on { background: #fff; }
.btabs svg, .tree svg { width: 16px; height: 16px; flex: none; }
.search { flex: none; height: 25px; margin: 8px 0 8px 9px; display: flex; align-items: center; padding-left: 8px; gap: 9px; border: 1px solid #ddd; border-right: 0; }
.search input { flex: 1; outline: 0; appearance: none; }
.search input::placeholder { color: #aaa; }
.tree { padding-left: 2px; }
.tree li { display: flex; align-items: center; height: 20px; white-space: nowrap; }
.tree svg { margin: 0 4px 0 5px; }
.tree span { margin-left: 5px; }
.tree b { font-weight: 700; }
.sel { background: #f0f0f0; box-shadow: inset 0 1px #ddd, inset 0 -1px #ddd; }
.tree i {
  --v: repeating-linear-gradient(#b5b5b5 0 3px, transparent 3px 5px);
  --h: repeating-linear-gradient(90deg, #b5b5b5 0 3px, transparent 3px 5px);
  width: 16px; height: 20px; flex: none; background-repeat: no-repeat;
}
.tree .v { background-image: var(--v); background-position: 8px 0; background-size: 1px 20px; }
.tree .v.h { background-image: var(--v), var(--h); background-position: 8px 0, 8px 10px; background-size: 1px 20px, 8px 1px; }
.tree .e.h { background-image: var(--v), var(--h); background-position: 8px 0, 8px 10px; background-size: 1px 10px, 8px 1px; }
.tree .f { background-image: var(--h); background-position: 0 10px; background-size: 16px 1px; }
.tree .m { background-image: linear-gradient(#666, #666); background-position: 4px 9px; background-size: 8px 2px; }
.tree .m.p { background-image: linear-gradient(#666, #666), linear-gradient(#666, #666); background-position: 4px 9px, 7px 6px; background-size: 8px 2px, 2px 8px; }

/* status bar */
.status { flex: none; height: 24px; display: flex; align-items: center; background: #f4f4f4; border-bottom: 1px solid #aab6c4; padding-right: 55px; }
.status > svg { flex: none; }
.msg { width: 50%; flex: none; margin-right: 20px; color: #222; }
.dd { transform: rotate(180deg); margin-left: 203px; opacity: .7; }
.num { display: flex; align-items: center; gap: 3px; margin-left: 12px; width: 40px; color: #888; }
.ls { margin-left: 12px; }
.ls2 { margin: 0 10px 0 11px; }
.model { width: 200px; color: #999; }
.sel-tools { display: flex; gap: 10px; margin: 0 2px 0 auto; }
.sel-tools svg { width: 16px; height: 16px; }
.edge { flex: none; height: 3px; background: linear-gradient(90deg, #e3ecf7, #cfdcf1 40%, #e3ecf7); }

.watermark { position: absolute; left: 79%; bottom: 54px; color: rgba(130, 130, 130, .6); font-size: 16px; line-height: 22px; pointer-events: none; white-space: nowrap; }
.watermark .wt { font-size: 21px; line-height: 24px; }
```
